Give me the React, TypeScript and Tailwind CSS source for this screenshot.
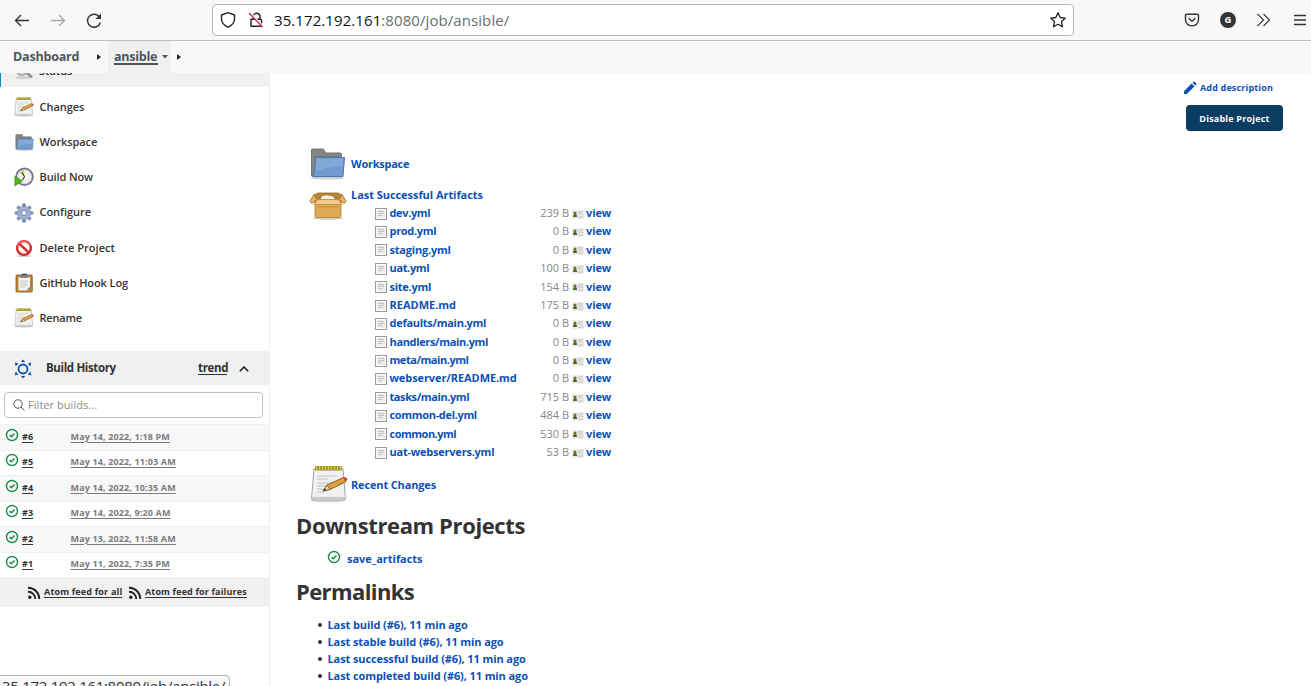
import type { ReactNode } from 'react';

function NotepadIcon({ className }: { className: string }) {
  return (
    <svg viewBox="0 0 38 38" className={className}>
      <ellipse cx="18.5" cy="35.5" rx="17" ry="1.8" fill="#bbb" opacity=".6" />
      <path d="M4 3.5H33L35.5 33.5Q35.5 35 34 35H3Q1.5 35 1.5 33.5Z" fill="#f1f1f0" stroke="#a5a6a3" />
      <path d="M2 32H35V34H2Z" fill="#c9cac7" />
      <path d="M7 11H27M7 14H18M7 18H25M7 21H20M7 24H17M7 27H14" stroke="#c4c5c2" />
      <path d="M5 1H32V5.5H5Z" fill="#8d8433" />
      <path d="M6.5 1V5M9.5 1V5M12.500 1V5M15.500 1V5M18.500 1V5M21.500 1V5M24.500 1V5M27.500 1V5M30.500 1V5" stroke="#d9c83a" strokeWidth="1.700" />
      <path d="M13 26L17 20L33.500 12.500L36 16.500L20 24.500Z" fill="#e0a040" stroke="#7d4c12" strokeWidth=".9" />
      <path d="M13 26L17 20L20 24.500Z" fill="#e9d2a6" stroke="#6b4a1c" strokeWidth=".6" />
      <path d="M33 12.600L36 12.200L37.500 14.500L35.500 16.700Z" fill="#e03a2f" />
      <path d="M13 26L15 23.300L16 25Z" fill="#222" />
    </svg>
  );
}

function FolderIcon({ className }: { className: string }) {
  return (
    <svg viewBox="0 0 36 32" className={className}>
      <ellipse cx="18" cy="30" rx="17" ry="1.500" fill="#aaa" opacity=".6" />
      <path d="M1.500 28V2Q1.500 1 2.500 1H13Q14 1 14.500 2.500L15.500 5H30Q31.500 5 31.500 6.500V28Z" fill="#858683" stroke="#72736f" />
      <path d="M3 9H30" stroke="#6c6d6a" />
      <path d="M5.500 9.500H34.500L33 28.500H2.500Q4 27.500 4.300 24Z" fill="#729ccf" stroke="#4a78b5" />
      <path d="M6.500 10.500H33.300L32.800 18Q18 18 6 23.500Z" fill="#8db3de" opacity=".6" />
    </svg>
  );
}

function BoxIcon({ className }: { className: string }) {
  return (
    <svg viewBox="0 0 38 28" className={className}>
      <ellipse cx="19" cy="26.300" rx="15" ry="1.500" fill="#aaa" opacity=".6" />
      <path d="M5 3L9 1H29L33 3L32 12H6Z" fill="#b5833a" stroke="#a06c1c" strokeWidth=".8" />
      <path d="M12 7.500Q12 3.500 15 4Q18 2.500 20 4Q24 3 26 7.500Z" fill="#f3efe5" />
      <path d="M5 2.500L.8 9.500L3 11.500L8 7.500Z" fill="#e7b36c" stroke="#a06617" strokeWidth=".8" />
      <path d="M33 2.500L37.200 9.500L35 11.500L30 7.500Z" fill="#e7b36c" stroke="#a06617" strokeWidth=".8" />
      <path d="M6 11.500H32V24Q32 25.500 30.500 25.500H7.500Q6 25.500 6 24Z" fill="#e2a954" stroke="#b97f2c" strokeWidth=".8" />
      <path d="M8.500 7.500H29.500L33 12.500H5Z" fill="#f0c98e" stroke="#c08735" strokeWidth=".8" />
      <path d="M8 14H30V15.500H8Z" fill="#c98a2f" opacity=".7" />
    </svg>
  );
}

function MagnifierIcon() {
  return (
    <svg viewBox="0 0 20 20" className="size-5">
      <ellipse cx="9" cy="17.500" rx="8" ry="1.800" fill="#d3d3d3" />
      <path d="M11 11L17 16.500" stroke="#969696" strokeWidth="3" strokeLinecap="round" />
      <circle cx="8" cy="9" r="6" fill="#cfe0f2" stroke="#999" strokeWidth="1.500" />
    </svg>
  );
}

function ClockIcon() {
  return (
    <svg viewBox="0 0 20 20" className="size-5">
      <circle cx="10.500" cy="9.800" r="8.300" fill="#f3f3ee" stroke="#77758f" strokeWidth="1.900" />
      <circle cx="10.500" cy="9.800" r="6.900" fill="none" stroke="#c9c9cf" strokeWidth=".7" />
      <path d="M10.500 9.800L5.500 5.500Q7.500 3 10 3Z" fill="#e8cf62" />
      <path d="M8 5.500L10.500 9.800L8.500 13" stroke="#333" fill="none" strokeWidth="1.100" />
      <path d="M.8 9V19L8.500 14Z" fill="#4fb321" stroke="#378d12" strokeWidth=".6" />
    </svg>
  );
}

function GearIcon() {
  return (
    <svg viewBox="0 0 20 20" className="size-5">
      <g fill="#8294bd">
        <rect x="8.200" y=".6" width="3.600" height="18.800" rx="1" fill="#6d80ae" />
        <rect x="8.200" y=".6" width="3.600" height="18.800" rx="1" transform="rotate(45 10 10)" />
        <rect x="8.200" y=".6" width="3.600" height="18.800" rx="1" transform="rotate(90 10 10)" />
        <rect x="8.200" y=".6" width="3.600" height="18.800" rx="1" transform="rotate(135 10 10)" />
      </g>
      <circle cx="10" cy="10" r="6.600" fill="#a3afd2" stroke="#8090ba" strokeWidth=".7" />
      <circle cx="10" cy="10" r="2.500" fill="#fff" stroke="#7483ad" />
    </svg>
  );
}

function DeleteIcon() {
  return (
    <svg viewBox="0 0 20 20" className="size-5">
      <ellipse cx="10" cy="18" rx="7" ry="1" fill="#ccc" />
      <circle cx="10" cy="10" r="6.900" fill="#f8f4f4" stroke="#d42a2a" strokeWidth="2.400" />
      <path d="M5.500 5.800L14.500 14.300" stroke="#d42a2a" strokeWidth="2.400" />
      <path d="M3.300 8A7 7 0 0 1 16.700 8" fill="none" stroke="#ea7070" strokeWidth="1.200" />
    </svg>
  );
}

function ClipboardIcon() {
  return (
    <svg viewBox="0 0 20 20" className="size-5">
      <rect x="2" y="2" width="16.300" height="17" rx="1" fill="#b98235" stroke="#8c5e1d" strokeWidth=".8" />
      <path d="M4.500 4H16V17.500H4.500Z" fill="#f3f3f1" />
      <path d="M6 8H14M6 10H13M6 12H14M6 14H11" stroke="#bdbdbd" strokeWidth=".8" />
      <path d="M12 17.500L16 13.500V17.500Z" fill="#8e8f8b" />
      <rect x="5.500" y="1.500" width="9.500" height="3.400" rx="1" fill="#8c8d89" />
      <rect x="7.500" y=".6" width="5.500" height="2.500" rx="1" fill="#62635f" />
    </svg>
  );
}

function SuccessIcon() {
  return (
    <svg viewBox="0 0 14 14" className="size-3.5 shrink-0" fill="none" stroke="#1a8a4c">
      <circle cx="7" cy="7" r="5.500" strokeWidth="1.400" />
      <path d="M4.600 7.100L6.400 8.800L9.500 5.400" strokeWidth="1.500" />
    </svg>
  );
}

function SunIcon() {
  return (
    <svg viewBox="0 0 20 20" className="size-5" fill="#0b51b7">
      <circle cx="10" cy="10" r="4.500" fill="none" stroke="#0b51b7" strokeWidth="1.800" />
      <path d="M7.800 3.100L10 .4L12.200 3.100ZM7.800 16.900L10 19.600L12.200 16.900Z" />
      <path d="M1.700 3.500L5.200 4.500L2.700 7.400ZM18.300 3.500L14.800 4.500L17.300 7.400ZM1.700 16.500L5.200 15.500L2.700 12.600ZM18.300 16.500L14.800 15.500L17.300 12.600Z" />
    </svg>
  );
}

function RssIcon() {
  return (
    <svg viewBox="0 0 14 14" className="size-3.5 shrink-0" fill="none" stroke="#222" strokeWidth="1.900">
      <circle cx="2.800" cy="11.300" r="1.700" fill="#222" stroke="none" />
      <path d="M1 5.800A7 7 0 0 1 8.200 13M1 1.700A11.200 11.200 0 0 1 12.300 13" />
    </svg>
  );
}

function FileIcon() {
  return (
    <svg viewBox="0 0 12 12" className="mt-px size-3 shrink-0">
      <rect x=".5" y=".5" width="11" height="11" fill="#fcfcfc" stroke="#9a9b98" />
      <path d="M2 2H10V10H2Z" fill="#ececec" />
      <path d="M3 3.500H9M3 5.500H9M3 7.500H7" stroke="#c2c3c0" />
    </svg>
  );
}

function CardIcon() {
  return (
    <svg viewBox="0 0 12 9" className="mt-0.5 h-[9px] w-3 shrink-0">
      <rect width="12" height="9" fill="#ececea" />
      <path d="M6 2H11M6 4H9M9.500 4.500H11M6 7H11" stroke="#b5b5b5" strokeWidth=".8" />
      <circle cx="3" cy="3" r="1.600" fill="#8a6a20" />
      <path d="M1 7Q1 4 3 4Q5 4 5 7Z" fill="#4c6420" />
    </svg>
  );
}

const tasks: { label: string; icon: ReactNode; track: string }[] = [
  { label: 'Changes', icon: <NotepadIcon className="size-5" />, track: 'tracking-[-0.03px]' },
  { label: 'Workspace', icon: <FolderIcon className="h-[17px] w-[19px]" />, track: 'tracking-[-0.1px]' },
  { label: 'Build Now', icon: <ClockIcon />, track: 'tracking-[-0.1px]' },
  { label: 'Configure', icon: <GearIcon />, track: 'tracking-[-0.05px]' },
  { label: 'Delete Project', icon: <DeleteIcon />, track: 'tracking-[0.05px]' },
  { label: 'GitHub Hook Log', icon: <ClipboardIcon />, track: 'tracking-[-0.1px]' },
  { label: 'Rename', icon: <NotepadIcon className="size-5" />, track: 'tracking-[-0.2px]' },
];

const builds = [
  ['#6', 'May 14, 2022, 1:18 PM'],
  ['#5', 'May 14, 2022, 11:03 AM'],
  ['#4', 'May 14, 2022, 10:35 AM'],
  ['#3', 'May 14, 2022, 9:20 AM'],
  ['#2', 'May 13, 2022, 11:58 AM'],
  ['#1', 'May 11, 2022, 7:35 PM'],
];

const artifacts = [
  ['dev.yml', '239 B', 'tracking-[-0.35px]'],
  ['prod.yml', '0 B', 'tracking-[-0.3px]'],
  ['staging.yml', '0 B', 'tracking-[-0.2px]'],
  ['uat.yml', '100 B', 'tracking-[-0.35px]'],
  ['site.yml', '154 B', 'tracking-[-0.25px]'],
  ['README.md', '175 B', 'tracking-normal'],
  ['defaults/main.yml', '0 B', 'tracking-[-0.28px]'],
  ['handlers/main.yml', '0 B', 'tracking-[-0.35px]'],
  ['meta/main.yml', '0 B', 'tracking-[-0.45px]'],
  ['webserver/README.md', '0 B', 'tracking-[-0.08px]'],
  ['tasks/main.yml', '715 B', 'tracking-[-0.4px]'],
  ['common-del.yml', '484 B', 'tracking-[-0.33px]'],
  ['common.yml', '530 B', 'tracking-[-0.5px]'],
  ['uat-webservers.yml', '53 B', 'tracking-[-0.22px]'],
];

const permalinks = ['Last build (#6), 11 min ago', 'Last stable build (#6), 11 min ago', 'Last successful build (#6), 11 min ago', 'Last completed build (#6), 11 min ago'];

function BrowserBar() {
  return (
    <div className="flex h-[41px] shrink-0 items-center border-b border-[#bdbdbd] bg-[#f8f8f8] pl-3.5 text-[#333]">
      <svg viewBox="0 0 90 20" className="h-5 w-[90px] shrink-0" fill="none" stroke="#333" strokeWidth="1.400">
        <path d="M15 10.500H1.500M7 5L1.500 10.500L7 16" />
        <path d="M37 10.500H50.500M45 5L50.500 10.500L45 16" stroke="#aaa" />
        <path d="M85.500 7.200A6.500 6.500 0 1 0 86.300 12.500" />
        <path d="M87 3.500V9H81.500Z" fill="#333" stroke="none" />
      </svg>
      <div className="ml-[108px] flex h-8 w-[862px] shrink-0 items-center rounded border border-[#b9b9b9] bg-white px-[7px]">
        <svg viewBox="0 0 44 18" className="h-[18px] w-11 shrink-0" fill="none" stroke="#222" strokeWidth="1.400">
          <path d="M8 1.600L14.500 4V8.500Q14 13.500 8 16.200Q2 13.500 1.500 8.500V4Z" strokeLinejoin="round" />
          <path d="M33.300 8V4.800A3.500 3.500 0 0 1 40 4.800V8M31 8.300H40.500Q41.500 8.300 41.500 9.300V15.300H31Z" />
          <path d="M29.500 1L43 15" stroke="#fff" strokeWidth="1.500" />
          <path d="M29 2L42.500 16" stroke="#e22850" strokeWidth="1.400" />
        </svg>
        <span className="ml-2.5 flex-1 text-[15px] tracking-[0.08px] text-[#6d6d6d]">
          <span className="text-[#111]">35.172.192.161</span>:8080/job/ansible/
        </span>
        <svg viewBox="0 0 18 18" className="-mr-px size-[18px]" fill="none" stroke="#222" strokeWidth="1.300" strokeLinejoin="round">
          <path d="M9 1.800L11.200 6.500L16.300 7.100L12.500 10.600L13.500 15.800L9 13.200L4.500 15.800L5.500 10.600L1.700 7.100L6.800 6.500Z" />
        </svg>
      </div>
      <svg viewBox="0 0 16 16" className="ml-[110px] size-4 shrink-0" fill="none" stroke="#333" strokeWidth="1.400">
        <path d="M2.500 2.200H13.500Q14.500 2.200 14.500 3.200V7.500Q14 13.700 8 13.900Q2 13.700 1.500 7.500V3.200Q1.500 2.200 2.500 2.200Z" />
        <path d="M4.700 6.300L8 9.200L11.300 6.300" />
      </svg>
      <span className="ml-5 flex size-4 shrink-0 items-center justify-center rounded-full bg-[#333] text-[9.5px] font-bold text-white">G</span>
      <svg viewBox="0 0 16 14" className="ml-5 h-3.5 w-4 shrink-0" fill="none" stroke="#444" strokeWidth="1.300">
        <path d="M1.500 1L7.500 7L1.500 13M7.500 1L13.500 7L7.500 13" />
      </svg>
      <svg viewBox="0 0 12 12" className="ml-[22px] size-3 shrink-0" stroke="#333" strokeWidth="1.300">
        <path d="M0 1.500H12M0 6H12M0 10.500H12" />
      </svg>
    </div>
  );
}

function Breadcrumbs() {
  return (
    <nav className="z-10 flex h-8 shrink-0 items-center bg-[#f8f8f8] pl-[13px] text-[12.5px] font-bold text-[#4d545d]">
      <span className="w-[84px] tracking-[-0.2px]">Dashboard</span>
      <svg viewBox="0 0 4 6" className="h-1.5 w-1" fill="#222"><path d="M0 0L4 3L0 6Z" /></svg>
      <span className="ml-[7px] flex h-full w-[63px] items-center bg-[#f0f0f0] pl-1.5">
        <span className="h-[15px] w-11 border-b-2 border-[#4d545d] leading-[14px] tracking-[-0.25px]">ansible</span>
        <svg viewBox="0 0 6 4" className="ml-1 h-1 w-1.5" fill="#4d545d"><path d="M0 0H6L3 3.500Z" /></svg>
      </span>
      <svg viewBox="0 0 4 6" className="ml-1.5 h-1.5 w-1" fill="#222"><path d="M0 0L4 3L0 6Z" /></svg>
    </nav>
  );
}

function Sidebar() {
  return (
    <aside className="w-[270px] shrink-0 overflow-hidden border-r border-[#efefef] text-[#333]">
      <div className="-mt-5 flex h-[34px] items-center border-l border-[#0b8ad0] bg-[#f0f0f0] pl-[13px] text-[11px] font-semibold">
        <MagnifierIcon />
        <span className="ml-[5px] mt-[3px]">Status</span>
      </div>
      <ul className="mb-[15.5px] mt-[2.5px] text-[11px] font-semibold">
        {tasks.map((task) => (
          <li key={task.label} className="flex h-[35.2px] items-center pl-3.5">
            <span className="flex w-5 justify-center">{task.icon}</span>
            <span className="ml-[5.5px]"><span className={task.track}>{task.label}</span></span>
          </li>
        ))}
      </ul>
      <div className="flex h-[34px] items-center bg-[#f0f0f0] pl-[13px] text-[11.5px] font-bold">
        <span className="mt-px"><SunIcon /></span>
        <span className="-mt-0.5 ml-[13px] w-[152px] tracking-[-0.36px]">Build History</span>
        <span className="h-3.5 w-[29px] border-b border-[#333] leading-[13px] tracking-[-0.3px]">trend</span>
        <svg viewBox="0 0 10 6" className="ml-3 mt-0.5 h-1.5 w-2.5" fill="none" stroke="#222" strokeWidth="1.600"><path d="M.8 5.300L5 1L9.200 5.300" /></svg>
      </div>
      <div className="ml-1 mt-[7px] flex h-[26px] w-[259px] items-center rounded border border-[#b9c5cd] pl-2 text-[11px] text-[#8a8d91]">
        <svg viewBox="0 0 12 12" className="size-3" fill="none" stroke="#555"><circle cx="5" cy="5" r="4.200" /><path d="M8 8L11.500 11.500" /></svg>
        <span className="ml-[3px] tracking-[0.05px]">Filter builds...</span>
      </div>
      <ul className="mt-1.5 text-[9px] font-bold">
        {builds.map(([id, date]) => (
          <li key={id} className="flex h-[25.5px] items-center border-t border-[#f0f0f0] pb-[2.4px] pl-[5px] odd:bg-[#f8f8f8]">
            <span className="-mt-[3px]"><SuccessIcon /></span>
            <span className="ml-[3px] w-[48.5px] tracking-[0.1px] underline underline-offset-2">{id}</span>
            <span className="tracking-[0.14px] text-[#7b7b7b] underline underline-offset-2">{date}</span>
          </li>
        ))}
      </ul>
      <div className="flex h-[29.5px] items-center bg-[#f0f0f0] pl-[27px] text-[9px] font-bold">
        <span className="mt-px"><RssIcon /></span>
        <span className="ml-[3px] w-[82px] whitespace-nowrap tracking-[0.17px] underline underline-offset-2">Atom feed for all</span>
        <span className="ml-0.5 mt-px"><RssIcon /></span>
        <span className="ml-[3px] whitespace-nowrap tracking-[0.14px] underline underline-offset-2">Atom feed for failures</span>
      </div>
    </aside>
  );
}

export default function App() {
  return (
    <div className="relative flex h-[686px] w-[1311px] flex-col overflow-hidden bg-white font-['Open_Sans','Noto_Sans',sans-serif]">
      <BrowserBar />
      <Breadcrumbs />
      <div className="flex min-h-0 flex-1">
        <Sidebar />
        <main className="flex min-w-0 flex-1 justify-between overflow-hidden pl-[26px] pr-7 text-[11px] font-bold text-[#0b51b7]">
          <div className="w-[400px]">
            <div className="flex h-[107px] items-end pl-3.5">
              <FolderIcon className="h-8 w-9" />
              <span className="mb-2 ml-[5px] tracking-[-0.25px]">Workspace</span>
            </div>
            <div className="mt-[5px] flex pl-[13px]">
              <BoxIcon className="mt-[7px] h-7 w-[38px] shrink-0" />
              <div className="ml-1">
                <div className="mt-px h-[18px] leading-[17px] tracking-[-0.05px]">Last Successful Artifacts</div>
                <ul className="ml-6">
                  {artifacts.map(([name, size, track]) => (
                    <li key={name} className="flex h-[18.4px] items-center">
                      <FileIcon />
                      <span className="ml-[2.5px] w-[137.5px] whitespace-nowrap"><span className={track}>{name}</span></span>
                      <span className="w-[42px] text-right font-normal text-[#888]">{size}</span>
                      <span className="ml-[3px] flex"><CardIcon /></span>
                      <span className="ml-0.5 tracking-[-0.1px]">view</span>
                    </li>
                  ))}
                </ul>
              </div>
            </div>
            <div className="mt-1 flex items-center pl-[14px]">
              <NotepadIcon className="size-[38px]" />
              <span className="ml-[3px] mt-0.5 tracking-[-0.15px]">Recent Changes</span>
            </div>
            <h2 className="mt-[7px] h-[30px] text-[22px] leading-[30px] tracking-[-0.38px] text-[#333]">Downstream Projects</h2>
            <div className="mt-[7px] flex h-6 items-center pl-[31px]">
              <span className="mb-1"><SuccessIcon /></span>
              <span className="ml-1.5 tracking-[-0.03px]">save_artifacts</span>
            </div>
            <h2 className="mt-[5px] h-[30px] text-[22px] leading-[30px] tracking-[-0.6px] text-[#333]">Permalinks</h2>
            <ul className="mt-2.5 tracking-[-0.1px]">
              {permalinks.map((link) => (
                <li key={link} className="flex h-[17px] items-center pl-[22px]">
                  <span className="mr-[5.5px] mt-px size-1 rounded-full bg-[#333]" />
                  {link}
                </li>
              ))}
            </ul>
          </div>
          <div className="flex w-[100px] flex-col items-end text-[9px]">
            <div className="mt-[7px] flex h-4 w-full items-center">
              <svg viewBox="0 0 14 14" className="size-3.5 shrink-0" fill="#0b51b7"><path d="M1 10.200L8.600 2.600L11.400 5.400L3.800 13H1ZM9.500 1.800L10.500 .8Q11 .4 11.500 .8L13.200 2.500Q13.600 3 13.200 3.500L12.200 4.500Z" /></svg>
              <span className="ml-[3px] whitespace-nowrap tracking-[0.15px]">Add description</span>
            </div>
            <button className="mt-[9px] h-[26px] w-[97px] whitespace-nowrap rounded-sm bg-[#093d62] pt-px tracking-[0.2px] text-white">Disable Project</button>
          </div>
        </main>
      </div>
      <div className="absolute -left-px top-[675px] h-6 w-[231px] rounded-tr border border-[#b5b5b5] bg-[#f8f8f8] pl-0.5 text-[15px] leading-[21px] tracking-[-0.3px] text-[#333]">35.172.192.161:8080/job/ansible/</div>
    </div>
  );
}
